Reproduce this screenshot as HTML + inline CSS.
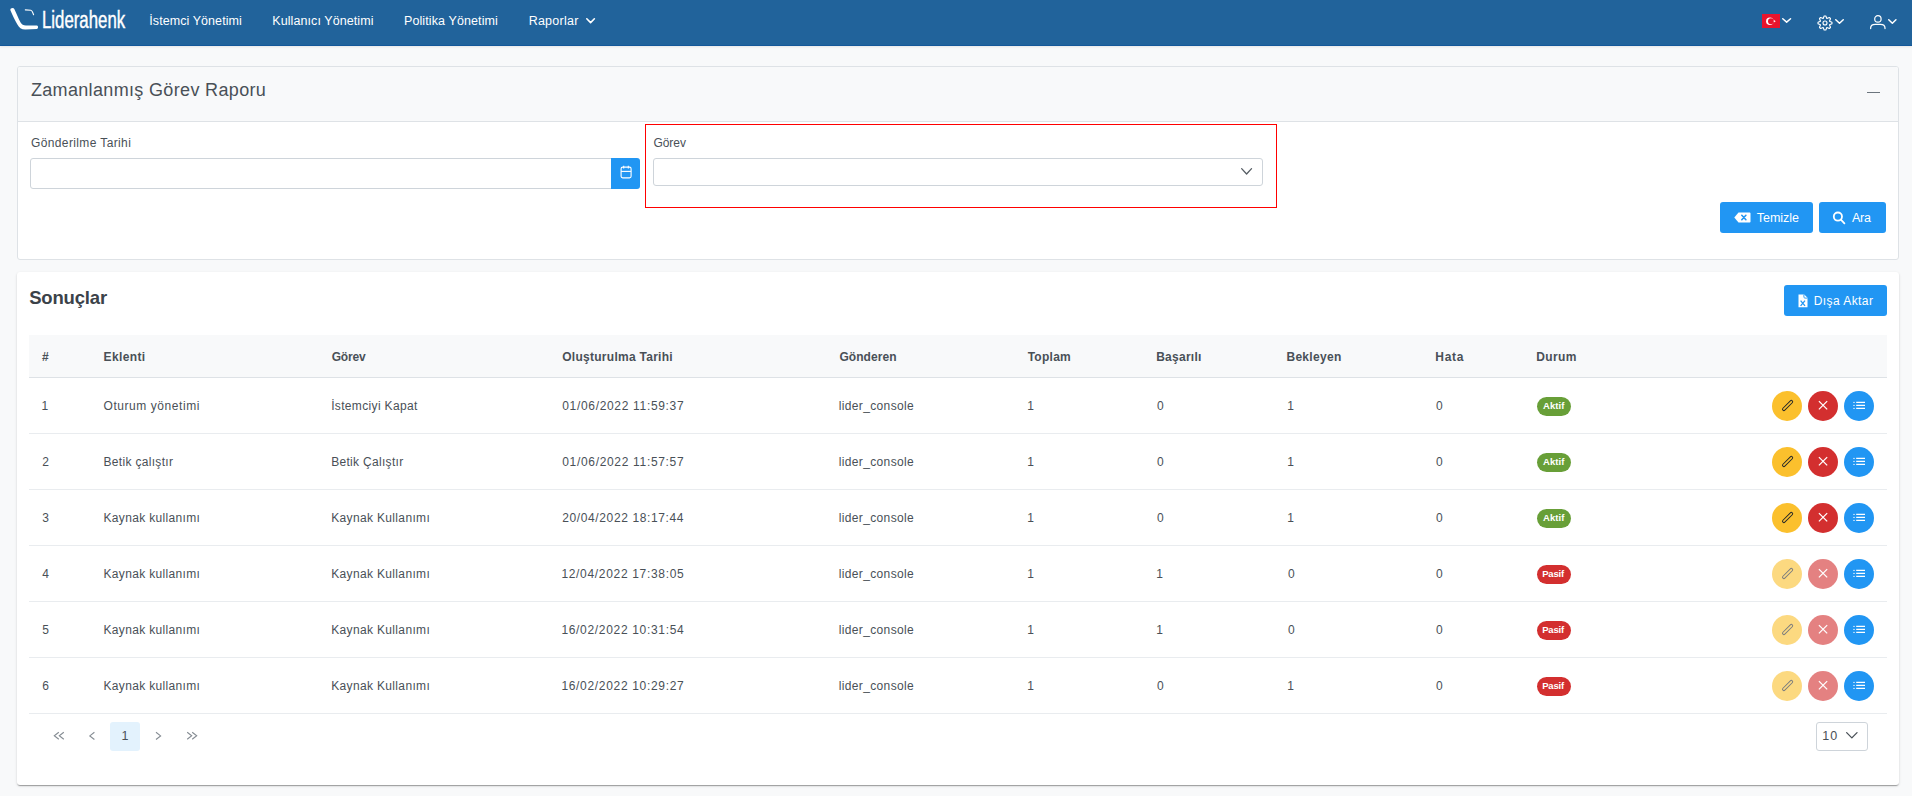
<!DOCTYPE html><html><head><meta charset="utf-8"><title>Zamanlanmış Görev Raporu</title><style>
html,body{margin:0;padding:0}
body{width:1912px;height:796px;overflow:hidden;background:#f8f9fa;position:relative;font-family:"Liberation Sans",sans-serif}
.tx{position:absolute;white-space:nowrap;line-height:1.117;display:block}
.abs{position:absolute}
.nav{position:absolute;left:0;top:0;width:1912px;height:45px;background:#21639b;border-bottom:1px solid #14589a;box-shadow:0 1px 2px rgba(0,0,0,.08)}
.panel{position:absolute;left:17px;top:66px;width:1880px;height:192px;border:1px solid #dee2e6;border-radius:3px;background:#fff;overflow:hidden}
.phead{position:absolute;left:0;top:0;width:1880px;height:54px;background:#f8f9fa;border-bottom:1px solid #dee2e6}
.inp{position:absolute;border:1px solid #ced4da;background:#fff;box-sizing:border-box}
.btn{position:absolute;background:#2196f3;border-radius:3px;box-sizing:border-box}
.card{position:absolute;left:17px;top:272px;width:1882px;height:513px;background:#fff;border-radius:3px;box-shadow:0 2px 1px -1px rgba(0,0,0,.2),0 1px 1px 0 rgba(0,0,0,.14),0 1px 3px 0 rgba(0,0,0,.12)}
.thead{position:absolute;left:29px;top:335px;width:1858px;height:42px;background:#f8f9fa;border-bottom:1px solid #dee2e6}
.rowb{position:absolute;left:29px;width:1858px;height:1px;background:#e9ecef}
.badge{position:absolute;left:1537px;width:34px;height:19px;border-radius:10px}
.rb{position:absolute;width:30px;height:30px;border-radius:50%}
svg{position:absolute;overflow:visible}
</style></head><body>
<div class="nav"></div>
<svg class="abs" style="left:0;top:0" width="140" height="45" viewBox="0 0 140 45"><path d="M10.4 10.2 C12.5 15 15 20.5 17.4 24.6 C19 27.8 21.5 29.7 25.5 29.6 L36.8 29.1 C38.3 29.0 38.6 25.7 36.9 25.6 L26 25.6 C23.2 25.6 21.8 24.6 20.6 22.6 C18.5 18.6 16.5 13.5 14.3 9.0 C13.5 7.3 9.8 8.2 10.4 10.2 Z" fill="#fff"/><path d="M25.3 9.9 L30.8 10.3 C31.9 10.5 32.7 12.3 33.6 14.8" stroke="#fff" stroke-width="1.1" fill="none" stroke-linecap="round"/></svg>
<span id="t0" class="tx" style="left:41.52px;top:6px;font-size:25px;font-weight:400;color:#fff;letter-spacing:0.000px;transform:translateY(-0.4px) scale(0.672,0.99);transform-origin:0 100%;-webkit-text-stroke:0.45px #fff;">Liderahenk</span>
<span id="t1" class="tx" style="left:149.30px;top:15px;font-size:12.5px;font-weight:400;color:#fff;letter-spacing:0.067px;">İstemci Yönetimi</span>
<span id="t2" class="tx" style="left:272.30px;top:15px;font-size:12.5px;font-weight:400;color:#fff;letter-spacing:0.076px;">Kullanıcı Yönetimi</span>
<span id="t3" class="tx" style="left:403.98px;top:15px;font-size:12.5px;font-weight:400;color:#fff;letter-spacing:0.106px;">Politika Yönetimi</span>
<span id="t4" class="tx" style="left:528.64px;top:15px;font-size:12.5px;font-weight:400;color:#fff;letter-spacing:0.257px;">Raporlar</span>
<svg style="left:586.2px;top:18.3px" width="9.2" height="5.4" viewBox="0 0 9.2 5.4"><polyline points="0.8,0.8 4.6,4.6000000000000005 8.399999999999999,0.8" fill="none" stroke="#fff" stroke-width="1.6" stroke-linecap="round" stroke-linejoin="round"/></svg>
<svg style="left:1762px;top:14px" width="18" height="14" viewBox="0 0 18 14"><rect width="18" height="14" fill="#e8142c"/><circle cx="7.85" cy="7.25" r="3.75" fill="#fff"/><circle cx="9.0" cy="7.25" r="3.0" fill="#e8142c"/><path d="M13.95 7.20 L12.99 7.55 L12.95 8.58 L12.31 7.77 L11.33 8.05 L11.90 7.20 L11.33 6.35 L12.31 6.63 L12.95 5.82 L12.99 6.85 Z" fill="#fff"/></svg>
<svg style="left:1781.7px;top:18px" width="9.3" height="4.9" viewBox="0 0 9.3 4.9"><polyline points="0.75,0.75 4.65,4.15 8.55,0.75" fill="none" stroke="#fff" stroke-width="1.5" stroke-linecap="round" stroke-linejoin="round"/></svg>
<svg style="left:1817.1px;top:14.5px" width="16" height="16" viewBox="0 0 16 16"><path d="M6.18 3.45 L7.16 1.05 A7.00 7.00 0 0 1 8.84 1.05 L9.82 3.45 A4.90 4.90 0 0 1 9.93 3.50 L12.32 2.49 A7.00 7.00 0 0 1 13.51 3.68 L12.50 6.07 A4.90 4.90 0 0 1 12.55 6.18 L14.95 7.16 A7.00 7.00 0 0 1 14.95 8.84 L12.55 9.82 A4.90 4.90 0 0 1 12.50 9.93 L13.51 12.32 A7.00 7.00 0 0 1 12.32 13.51 L9.93 12.50 A4.90 4.90 0 0 1 9.82 12.55 L8.84 14.95 A7.00 7.00 0 0 1 7.16 14.95 L6.18 12.55 A4.90 4.90 0 0 1 6.07 12.50 L3.68 13.51 A7.00 7.00 0 0 1 2.49 12.32 L3.50 9.93 A4.90 4.90 0 0 1 3.45 9.82 L1.05 8.84 A7.00 7.00 0 0 1 1.05 7.16 L3.45 6.18 A4.90 4.90 0 0 1 3.50 6.07 L2.49 3.68 A7.00 7.00 0 0 1 3.68 2.49 L6.07 3.50 A4.90 4.90 0 0 1 6.18 3.45 Z" fill="none" stroke="#fff" stroke-width="1.1" stroke-linejoin="round"/><circle cx="8" cy="8" r="2.0" fill="none" stroke="#fff" stroke-width="1.1"/></svg>
<svg style="left:1834.8px;top:19px" width="9" height="5" viewBox="0 0 9 5"><polyline points="0.75,0.75 4.5,4.25 8.25,0.75" fill="none" stroke="#fff" stroke-width="1.5" stroke-linecap="round" stroke-linejoin="round"/></svg>
<svg style="left:1870.4px;top:15.4px" width="16" height="15" viewBox="0 0 16 15"><circle cx="7.9" cy="3.9" r="3.2" fill="none" stroke="#fff" stroke-width="1.2"/><path d="M0.65 13.5 L0.65 13.0 C0.65 10.9 2.6 9.4 5.2 9.4 L10.4 9.4 C13.0 9.4 15.0 10.9 15.0 13.0 L15.0 13.5" fill="none" stroke="#fff" stroke-width="1.25" stroke-linecap="round"/></svg>
<svg style="left:1887.5px;top:19px" width="8.7" height="5" viewBox="0 0 8.7 5"><polyline points="0.75,0.75 4.35,4.25 7.949999999999999,0.75" fill="none" stroke="#fff" stroke-width="1.5" stroke-linecap="round" stroke-linejoin="round"/></svg>
<div class="panel"><div class="phead"></div></div>
<span id="t5" class="tx" style="left:30.88px;top:80px;font-size:18px;font-weight:400;color:#495057;letter-spacing:0.343px;">Zamanlanmış Görev Raporu</span>
<div class="abs" style="left:1866.5px;top:92px;width:13.4px;height:1.2px;background:#6c757d"></div>
<span id="t6" class="tx" style="left:31.00px;top:137px;font-size:12px;font-weight:400;color:#495057;letter-spacing:0.375px;">Gönderilme Tarihi</span>
<div class="inp" style="left:30px;top:158px;width:582px;height:31px;border-radius:3px 0 0 3px"></div>
<div class="btn" style="left:611px;top:158px;width:29px;height:31px;border-radius:0 3px 3px 0"></div>
<svg style="left:620px;top:165px" width="12" height="14" viewBox="0 0 12 14"><rect x="1.1" y="2.1" width="10" height="10.8" rx="1.6" fill="none" stroke="#fff" stroke-width="1.1"/><line x1="1.1" y1="6.4" x2="11.1" y2="6.4" stroke="#fff" stroke-width="1.1"/><line x1="3.7" y1="0.8" x2="3.7" y2="3.6" stroke="#fff" stroke-width="1.1"/><line x1="8.3" y1="0.8" x2="8.3" y2="3.6" stroke="#fff" stroke-width="1.1"/></svg>
<div class="abs" style="left:645px;top:124px;width:630px;height:82px;border:1px solid #ff0000"></div>
<span id="t7" class="tx" style="left:653.44px;top:137px;font-size:12px;font-weight:400;color:#495057;letter-spacing:-0.050px;">Görev</span>
<div class="inp" style="left:653px;top:158px;width:610px;height:28px;border-radius:3px"></div>
<svg style="left:1241.4px;top:168px" width="11.2" height="6.6" viewBox="0 0 11.2 6.6"><polyline points="0.65,0.65 5.6,5.949999999999999 10.549999999999999,0.65" fill="none" stroke="#555c63" stroke-width="1.3" stroke-linecap="round" stroke-linejoin="round"/></svg>
<div class="btn" style="left:1720px;top:202px;width:93px;height:31px"></div>
<svg style="left:1733.5px;top:212px" width="17" height="11" viewBox="0 0 17 11"><path d="M0.3 5.5 L4.5 0.4 L15.4 0.4 C16 0.4 16.5 0.9 16.5 1.5 L16.5 9.5 C16.5 10.1 16 10.6 15.4 10.6 L4.5 10.6 Z" fill="#fff"/><path d="M7.8 3.3 L11.9 7.7 M11.9 3.3 L7.8 7.7" stroke="#2196f3" stroke-width="1.6" stroke-linecap="round"/></svg>
<span id="t8" class="tx" style="left:1756.78px;top:212px;font-size:12.5px;font-weight:400;color:#fff;letter-spacing:-0.017px;">Temizle</span>
<div class="btn" style="left:1819px;top:202px;width:67px;height:31px"></div>
<svg style="left:1832px;top:210.5px" width="14" height="14" viewBox="0 0 14 14"><circle cx="5.9" cy="5.6" r="4.1" fill="none" stroke="#fff" stroke-width="1.8"/><line x1="8.9" y1="8.7" x2="12.4" y2="12.3" stroke="#fff" stroke-width="1.8" stroke-linecap="round"/></svg>
<span id="t9" class="tx" style="left:1852.00px;top:212px;font-size:12.5px;font-weight:400;color:#fff;letter-spacing:-0.250px;">Ara</span>
<div class="card"></div>
<span id="t10" class="tx" style="left:29.20px;top:288px;font-size:18.5px;font-weight:700;color:#3b4249;letter-spacing:-0.171px;">Sonuçlar</span>
<div class="btn" style="left:1784px;top:285px;width:103px;height:31px"></div>
<svg style="left:1797.5px;top:293.5px" width="10" height="14" viewBox="0 0 10 14"><path d="M0.5 0.5 L6.2 0.5 L9.5 3.8 L9.5 13.3 L0.5 13.3 Z" fill="#fff"/><path d="M5.9 0.6 L5.9 3.0 C5.9 3.6 6.3 4.1 6.9 4.1 L9.4 4.1" fill="none" stroke="#2196f3" stroke-width="0.9"/><path d="M2.6 6.6 L7.0 11.8 M7.0 6.6 L2.6 11.8" stroke="#2196f3" stroke-width="1.3"/></svg>
<span id="t11" class="tx" style="left:1813.76px;top:295px;font-size:12px;font-weight:400;color:#fff;letter-spacing:0.422px;">Dışa Aktar</span>
<div class="thead"></div>
<span id="t12" class="tx" style="left:41.88px;top:351px;font-size:12px;font-weight:700;color:#495057;letter-spacing:0.000px;">#</span>
<span id="t13" class="tx" style="left:103.54px;top:351px;font-size:12px;font-weight:700;color:#495057;letter-spacing:0.383px;">Eklenti</span>
<span id="t14" class="tx" style="left:331.66px;top:351px;font-size:12px;font-weight:700;color:#495057;letter-spacing:-0.175px;">Görev</span>
<span id="t15" class="tx" style="left:562.22px;top:351px;font-size:12px;font-weight:700;color:#495057;letter-spacing:0.271px;">Oluşturulma Tarihi</span>
<span id="t16" class="tx" style="left:839.44px;top:351px;font-size:12px;font-weight:700;color:#495057;letter-spacing:0.057px;">Gönderen</span>
<span id="t17" class="tx" style="left:1027.68px;top:351px;font-size:12px;font-weight:700;color:#495057;letter-spacing:0.260px;">Toplam</span>
<span id="t18" class="tx" style="left:1156.20px;top:351px;font-size:12px;font-weight:700;color:#495057;letter-spacing:0.257px;">Başarılı</span>
<span id="t19" class="tx" style="left:1286.42px;top:351px;font-size:12px;font-weight:700;color:#495057;letter-spacing:0.314px;">Bekleyen</span>
<span id="t20" class="tx" style="left:1435.32px;top:351px;font-size:12px;font-weight:700;color:#495057;letter-spacing:0.667px;">Hata</span>
<span id="t21" class="tx" style="left:1536.32px;top:351px;font-size:12px;font-weight:700;color:#495057;letter-spacing:0.375px;">Durum</span>
<div class="rowb" style="top:433px"></div>
<span id="t22" class="tx" style="left:41.52px;top:400px;font-size:12px;font-weight:400;color:#495057;letter-spacing:0.000px;">1</span>
<span id="t23" class="tx" style="left:103.54px;top:400px;font-size:12px;font-weight:400;color:#495057;letter-spacing:0.557px;">Oturum yönetimi</span>
<span id="t24" class="tx" style="left:331.20px;top:400px;font-size:12px;font-weight:400;color:#495057;letter-spacing:0.336px;">İstemciyi Kapat</span>
<span id="t25" class="tx" style="left:562.22px;top:400px;font-size:12px;font-weight:400;color:#495057;letter-spacing:0.678px;">01/06/2022 11:59:37</span>
<span id="t26" class="tx" style="left:838.64px;top:400px;font-size:12px;font-weight:400;color:#495057;letter-spacing:0.367px;">lider_console</span>
<span id="t27" class="tx" style="left:1027.20px;top:400px;font-size:12px;font-weight:400;color:#495057;letter-spacing:0.000px;">1</span>
<span id="t28" class="tx" style="left:1157.10px;top:400px;font-size:12px;font-weight:400;color:#495057;letter-spacing:0.000px;">0</span>
<span id="t29" class="tx" style="left:1287.20px;top:400px;font-size:12px;font-weight:400;color:#495057;letter-spacing:0.000px;">1</span>
<span id="t30" class="tx" style="left:1436.00px;top:400px;font-size:12px;font-weight:400;color:#495057;letter-spacing:0.000px;">0</span>
<div class="badge" style="top:397px;background:#689f38"></div>
<span id="t31" class="tx" style="left:1543.00px;top:401px;font-size:9.5px;font-weight:700;color:#fff;letter-spacing:0.100px;">Aktif</span>
<svg style="left:1772px;top:391px;opacity:1" width="30" height="30" viewBox="0 0 30 30"><circle cx="15" cy="15" r="15" fill="#fbc02d"/><rect x="9.0" y="13.15" width="13.2" height="2.7" rx="1.35" transform="rotate(-45 15.6 14.5)" fill="none" stroke="#212529" stroke-width="0.95"/></svg>
<svg style="left:1808px;top:391px;opacity:1" width="30" height="30" viewBox="0 0 30 30"><circle cx="15" cy="15" r="15" fill="#d32f2f"/><path d="M10.9 10.1 L19.2 18.4 M19.2 10.1 L10.9 18.4" stroke="#fff" stroke-width="1.25"/></svg>
<svg style="left:1844px;top:391px" width="30" height="30" viewBox="0 0 30 30"><circle cx="15" cy="15" r="15" fill="#2196f3"/><path d="M12.2 11.4 L21 11.4 M12.2 14.4 L21 14.4 M12.2 17.4 L21 17.4" stroke="#fff" stroke-width="1.2"/><circle cx="10" cy="11.4" r="0.7" fill="#fff"/><circle cx="10" cy="14.4" r="0.7" fill="#fff"/><circle cx="10" cy="17.4" r="0.7" fill="#fff"/></svg>
<div class="rowb" style="top:489px"></div>
<span id="t32" class="tx" style="left:42.32px;top:456px;font-size:12px;font-weight:400;color:#495057;letter-spacing:0.000px;">2</span>
<span id="t33" class="tx" style="left:103.54px;top:456px;font-size:12px;font-weight:400;color:#495057;letter-spacing:0.315px;">Betik çalıştır</span>
<span id="t34" class="tx" style="left:331.20px;top:456px;font-size:12px;font-weight:400;color:#495057;letter-spacing:0.308px;">Betik Çalıştır</span>
<span id="t35" class="tx" style="left:562.22px;top:456px;font-size:12px;font-weight:400;color:#495057;letter-spacing:0.678px;">01/06/2022 11:57:57</span>
<span id="t36" class="tx" style="left:838.64px;top:456px;font-size:12px;font-weight:400;color:#495057;letter-spacing:0.367px;">lider_console</span>
<span id="t37" class="tx" style="left:1027.20px;top:456px;font-size:12px;font-weight:400;color:#495057;letter-spacing:0.000px;">1</span>
<span id="t38" class="tx" style="left:1157.10px;top:456px;font-size:12px;font-weight:400;color:#495057;letter-spacing:0.000px;">0</span>
<span id="t39" class="tx" style="left:1287.20px;top:456px;font-size:12px;font-weight:400;color:#495057;letter-spacing:0.000px;">1</span>
<span id="t40" class="tx" style="left:1436.00px;top:456px;font-size:12px;font-weight:400;color:#495057;letter-spacing:0.000px;">0</span>
<div class="badge" style="top:453px;background:#689f38"></div>
<span id="t41" class="tx" style="left:1543.00px;top:457px;font-size:9.5px;font-weight:700;color:#fff;letter-spacing:0.100px;">Aktif</span>
<svg style="left:1772px;top:447px;opacity:1" width="30" height="30" viewBox="0 0 30 30"><circle cx="15" cy="15" r="15" fill="#fbc02d"/><rect x="9.0" y="13.15" width="13.2" height="2.7" rx="1.35" transform="rotate(-45 15.6 14.5)" fill="none" stroke="#212529" stroke-width="0.95"/></svg>
<svg style="left:1808px;top:447px;opacity:1" width="30" height="30" viewBox="0 0 30 30"><circle cx="15" cy="15" r="15" fill="#d32f2f"/><path d="M10.9 10.1 L19.2 18.4 M19.2 10.1 L10.9 18.4" stroke="#fff" stroke-width="1.25"/></svg>
<svg style="left:1844px;top:447px" width="30" height="30" viewBox="0 0 30 30"><circle cx="15" cy="15" r="15" fill="#2196f3"/><path d="M12.2 11.4 L21 11.4 M12.2 14.4 L21 14.4 M12.2 17.4 L21 17.4" stroke="#fff" stroke-width="1.2"/><circle cx="10" cy="11.4" r="0.7" fill="#fff"/><circle cx="10" cy="14.4" r="0.7" fill="#fff"/><circle cx="10" cy="17.4" r="0.7" fill="#fff"/></svg>
<div class="rowb" style="top:545px"></div>
<span id="t42" class="tx" style="left:42.32px;top:512px;font-size:12px;font-weight:400;color:#495057;letter-spacing:0.000px;">3</span>
<span id="t43" class="tx" style="left:103.54px;top:512px;font-size:12px;font-weight:400;color:#495057;letter-spacing:0.333px;">Kaynak kullanımı</span>
<span id="t44" class="tx" style="left:331.20px;top:512px;font-size:12px;font-weight:400;color:#495057;letter-spacing:0.347px;">Kaynak Kullanımı</span>
<span id="t45" class="tx" style="left:562.22px;top:512px;font-size:12px;font-weight:400;color:#495057;letter-spacing:0.622px;">20/04/2022 18:17:44</span>
<span id="t46" class="tx" style="left:838.64px;top:512px;font-size:12px;font-weight:400;color:#495057;letter-spacing:0.367px;">lider_console</span>
<span id="t47" class="tx" style="left:1027.20px;top:512px;font-size:12px;font-weight:400;color:#495057;letter-spacing:0.000px;">1</span>
<span id="t48" class="tx" style="left:1157.10px;top:512px;font-size:12px;font-weight:400;color:#495057;letter-spacing:0.000px;">0</span>
<span id="t49" class="tx" style="left:1287.20px;top:512px;font-size:12px;font-weight:400;color:#495057;letter-spacing:0.000px;">1</span>
<span id="t50" class="tx" style="left:1436.00px;top:512px;font-size:12px;font-weight:400;color:#495057;letter-spacing:0.000px;">0</span>
<div class="badge" style="top:509px;background:#689f38"></div>
<span id="t51" class="tx" style="left:1543.00px;top:513px;font-size:9.5px;font-weight:700;color:#fff;letter-spacing:0.100px;">Aktif</span>
<svg style="left:1772px;top:503px;opacity:1" width="30" height="30" viewBox="0 0 30 30"><circle cx="15" cy="15" r="15" fill="#fbc02d"/><rect x="9.0" y="13.15" width="13.2" height="2.7" rx="1.35" transform="rotate(-45 15.6 14.5)" fill="none" stroke="#212529" stroke-width="0.95"/></svg>
<svg style="left:1808px;top:503px;opacity:1" width="30" height="30" viewBox="0 0 30 30"><circle cx="15" cy="15" r="15" fill="#d32f2f"/><path d="M10.9 10.1 L19.2 18.4 M19.2 10.1 L10.9 18.4" stroke="#fff" stroke-width="1.25"/></svg>
<svg style="left:1844px;top:503px" width="30" height="30" viewBox="0 0 30 30"><circle cx="15" cy="15" r="15" fill="#2196f3"/><path d="M12.2 11.4 L21 11.4 M12.2 14.4 L21 14.4 M12.2 17.4 L21 17.4" stroke="#fff" stroke-width="1.2"/><circle cx="10" cy="11.4" r="0.7" fill="#fff"/><circle cx="10" cy="14.4" r="0.7" fill="#fff"/><circle cx="10" cy="17.4" r="0.7" fill="#fff"/></svg>
<div class="rowb" style="top:601px"></div>
<span id="t52" class="tx" style="left:42.32px;top:568px;font-size:12px;font-weight:400;color:#495057;letter-spacing:0.000px;">4</span>
<span id="t53" class="tx" style="left:103.54px;top:568px;font-size:12px;font-weight:400;color:#495057;letter-spacing:0.333px;">Kaynak kullanımı</span>
<span id="t54" class="tx" style="left:331.20px;top:568px;font-size:12px;font-weight:400;color:#495057;letter-spacing:0.347px;">Kaynak Kullanımı</span>
<span id="t55" class="tx" style="left:561.42px;top:568px;font-size:12px;font-weight:400;color:#495057;letter-spacing:0.678px;">12/04/2022 17:38:05</span>
<span id="t56" class="tx" style="left:838.64px;top:568px;font-size:12px;font-weight:400;color:#495057;letter-spacing:0.367px;">lider_console</span>
<span id="t57" class="tx" style="left:1027.20px;top:568px;font-size:12px;font-weight:400;color:#495057;letter-spacing:0.000px;">1</span>
<span id="t58" class="tx" style="left:1156.30px;top:568px;font-size:12px;font-weight:400;color:#495057;letter-spacing:0.000px;">1</span>
<span id="t59" class="tx" style="left:1288.00px;top:568px;font-size:12px;font-weight:400;color:#495057;letter-spacing:0.000px;">0</span>
<span id="t60" class="tx" style="left:1436.00px;top:568px;font-size:12px;font-weight:400;color:#495057;letter-spacing:0.000px;">0</span>
<div class="badge" style="top:565px;background:#d32f2f"></div>
<span id="t61" class="tx" style="left:1542.20px;top:569px;font-size:9.5px;font-weight:700;color:#fff;letter-spacing:-0.200px;">Pasif</span>
<svg style="left:1772px;top:559px;opacity:0.6" width="30" height="30" viewBox="0 0 30 30"><circle cx="15" cy="15" r="15" fill="#fbc02d"/><rect x="9.0" y="13.15" width="13.2" height="2.7" rx="1.35" transform="rotate(-45 15.6 14.5)" fill="none" stroke="#212529" stroke-width="0.95"/></svg>
<svg style="left:1808px;top:559px;opacity:0.6" width="30" height="30" viewBox="0 0 30 30"><circle cx="15" cy="15" r="15" fill="#d32f2f"/><path d="M10.9 10.1 L19.2 18.4 M19.2 10.1 L10.9 18.4" stroke="#fff" stroke-width="1.25"/></svg>
<svg style="left:1844px;top:559px" width="30" height="30" viewBox="0 0 30 30"><circle cx="15" cy="15" r="15" fill="#2196f3"/><path d="M12.2 11.4 L21 11.4 M12.2 14.4 L21 14.4 M12.2 17.4 L21 17.4" stroke="#fff" stroke-width="1.2"/><circle cx="10" cy="11.4" r="0.7" fill="#fff"/><circle cx="10" cy="14.4" r="0.7" fill="#fff"/><circle cx="10" cy="17.4" r="0.7" fill="#fff"/></svg>
<div class="rowb" style="top:657px"></div>
<span id="t62" class="tx" style="left:42.32px;top:624px;font-size:12px;font-weight:400;color:#495057;letter-spacing:0.000px;">5</span>
<span id="t63" class="tx" style="left:103.54px;top:624px;font-size:12px;font-weight:400;color:#495057;letter-spacing:0.333px;">Kaynak kullanımı</span>
<span id="t64" class="tx" style="left:331.20px;top:624px;font-size:12px;font-weight:400;color:#495057;letter-spacing:0.347px;">Kaynak Kullanımı</span>
<span id="t65" class="tx" style="left:561.42px;top:624px;font-size:12px;font-weight:400;color:#495057;letter-spacing:0.678px;">16/02/2022 10:31:54</span>
<span id="t66" class="tx" style="left:838.64px;top:624px;font-size:12px;font-weight:400;color:#495057;letter-spacing:0.367px;">lider_console</span>
<span id="t67" class="tx" style="left:1027.20px;top:624px;font-size:12px;font-weight:400;color:#495057;letter-spacing:0.000px;">1</span>
<span id="t68" class="tx" style="left:1156.30px;top:624px;font-size:12px;font-weight:400;color:#495057;letter-spacing:0.000px;">1</span>
<span id="t69" class="tx" style="left:1288.00px;top:624px;font-size:12px;font-weight:400;color:#495057;letter-spacing:0.000px;">0</span>
<span id="t70" class="tx" style="left:1436.00px;top:624px;font-size:12px;font-weight:400;color:#495057;letter-spacing:0.000px;">0</span>
<div class="badge" style="top:621px;background:#d32f2f"></div>
<span id="t71" class="tx" style="left:1542.20px;top:625px;font-size:9.5px;font-weight:700;color:#fff;letter-spacing:-0.200px;">Pasif</span>
<svg style="left:1772px;top:615px;opacity:0.6" width="30" height="30" viewBox="0 0 30 30"><circle cx="15" cy="15" r="15" fill="#fbc02d"/><rect x="9.0" y="13.15" width="13.2" height="2.7" rx="1.35" transform="rotate(-45 15.6 14.5)" fill="none" stroke="#212529" stroke-width="0.95"/></svg>
<svg style="left:1808px;top:615px;opacity:0.6" width="30" height="30" viewBox="0 0 30 30"><circle cx="15" cy="15" r="15" fill="#d32f2f"/><path d="M10.9 10.1 L19.2 18.4 M19.2 10.1 L10.9 18.4" stroke="#fff" stroke-width="1.25"/></svg>
<svg style="left:1844px;top:615px" width="30" height="30" viewBox="0 0 30 30"><circle cx="15" cy="15" r="15" fill="#2196f3"/><path d="M12.2 11.4 L21 11.4 M12.2 14.4 L21 14.4 M12.2 17.4 L21 17.4" stroke="#fff" stroke-width="1.2"/><circle cx="10" cy="11.4" r="0.7" fill="#fff"/><circle cx="10" cy="14.4" r="0.7" fill="#fff"/><circle cx="10" cy="17.4" r="0.7" fill="#fff"/></svg>
<div class="rowb" style="top:713px"></div>
<span id="t72" class="tx" style="left:42.32px;top:680px;font-size:12px;font-weight:400;color:#495057;letter-spacing:0.000px;">6</span>
<span id="t73" class="tx" style="left:103.54px;top:680px;font-size:12px;font-weight:400;color:#495057;letter-spacing:0.333px;">Kaynak kullanımı</span>
<span id="t74" class="tx" style="left:331.20px;top:680px;font-size:12px;font-weight:400;color:#495057;letter-spacing:0.347px;">Kaynak Kullanımı</span>
<span id="t75" class="tx" style="left:561.42px;top:680px;font-size:12px;font-weight:400;color:#495057;letter-spacing:0.678px;">16/02/2022 10:29:27</span>
<span id="t76" class="tx" style="left:838.64px;top:680px;font-size:12px;font-weight:400;color:#495057;letter-spacing:0.367px;">lider_console</span>
<span id="t77" class="tx" style="left:1027.20px;top:680px;font-size:12px;font-weight:400;color:#495057;letter-spacing:0.000px;">1</span>
<span id="t78" class="tx" style="left:1157.10px;top:680px;font-size:12px;font-weight:400;color:#495057;letter-spacing:0.000px;">0</span>
<span id="t79" class="tx" style="left:1287.20px;top:680px;font-size:12px;font-weight:400;color:#495057;letter-spacing:0.000px;">1</span>
<span id="t80" class="tx" style="left:1436.00px;top:680px;font-size:12px;font-weight:400;color:#495057;letter-spacing:0.000px;">0</span>
<div class="badge" style="top:677px;background:#d32f2f"></div>
<span id="t81" class="tx" style="left:1542.20px;top:681px;font-size:9.5px;font-weight:700;color:#fff;letter-spacing:-0.200px;">Pasif</span>
<svg style="left:1772px;top:671px;opacity:0.6" width="30" height="30" viewBox="0 0 30 30"><circle cx="15" cy="15" r="15" fill="#fbc02d"/><rect x="9.0" y="13.15" width="13.2" height="2.7" rx="1.35" transform="rotate(-45 15.6 14.5)" fill="none" stroke="#212529" stroke-width="0.95"/></svg>
<svg style="left:1808px;top:671px;opacity:0.6" width="30" height="30" viewBox="0 0 30 30"><circle cx="15" cy="15" r="15" fill="#d32f2f"/><path d="M10.9 10.1 L19.2 18.4 M19.2 10.1 L10.9 18.4" stroke="#fff" stroke-width="1.25"/></svg>
<svg style="left:1844px;top:671px" width="30" height="30" viewBox="0 0 30 30"><circle cx="15" cy="15" r="15" fill="#2196f3"/><path d="M12.2 11.4 L21 11.4 M12.2 14.4 L21 14.4 M12.2 17.4 L21 17.4" stroke="#fff" stroke-width="1.2"/><circle cx="10" cy="11.4" r="0.7" fill="#fff"/><circle cx="10" cy="14.4" r="0.7" fill="#fff"/><circle cx="10" cy="17.4" r="0.7" fill="#fff"/></svg>
<div class="abs" style="left:110px;top:722px;width:30px;height:29px;border-radius:3px;background:#e3f2fd"></div>
<span id="t82" class="tx" style="left:121.42px;top:730px;font-size:12.5px;font-weight:400;color:#495057;letter-spacing:0.000px;">1</span>
<svg style="left:0;top:0" width="220" height="796" viewBox="0 0 220 796"><polyline points="4.5,0 0,3.5 4.5,7" transform="translate(54.3,732.3)" fill="none" stroke="#858c93" stroke-width="1.1"/><polyline points="4.5,0 0,3.5 4.5,7" transform="translate(59.3,732.3)" fill="none" stroke="#858c93" stroke-width="1.1"/><polyline points="4.6,0 0,3.6 4.6,7.2" transform="translate(89.8,732.3)" fill="none" stroke="#858c93" stroke-width="1.1"/><polyline points="0,0 4.6,3.6 0,7.2" transform="translate(156,732.3)" fill="none" stroke="#858c93" stroke-width="1.1"/><polyline points="0,0 4.5,3.5 0,7" transform="translate(187.2,732.3)" fill="none" stroke="#858c93" stroke-width="1.1"/><polyline points="0,0 4.5,3.5 0,7" transform="translate(192.2,732.3)" fill="none" stroke="#858c93" stroke-width="1.1"/></svg>
<div class="inp" style="left:1816px;top:722px;width:52px;height:29px;border-radius:3px"></div>
<span id="t83" class="tx" style="left:1822.30px;top:730px;font-size:12.5px;font-weight:400;color:#495057;letter-spacing:0.900px;">10</span>
<svg style="left:1846px;top:732.3px" width="11.7" height="6.5" viewBox="0 0 11.7 6.5"><polyline points="0.65,0.65 5.85,5.85 11.049999999999999,0.65" fill="none" stroke="#495057" stroke-width="1.3" stroke-linecap="round" stroke-linejoin="round"/></svg>
</body></html>
